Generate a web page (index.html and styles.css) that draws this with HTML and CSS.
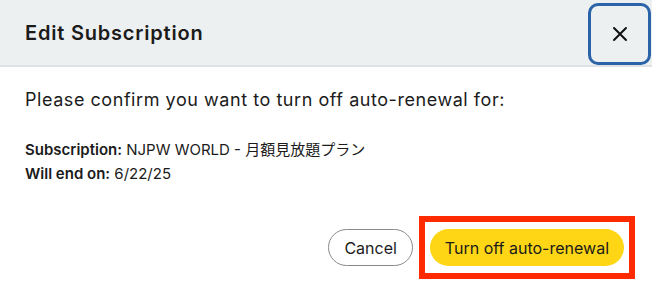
FILE: index.html
```html
<!DOCTYPE html>
<html lang="en">
<head>
  <meta charset="UTF-8" />
  <meta name="viewport" content="width=device-width, initial-scale=1.0"/>
  <title>Edit Subscription</title>
  <link rel="stylesheet" href="styles.css">
</head>
<body>

  <div class="modal">
    <div class="modal-header">
      <h2 class="modal-title">Edit Subscription</h2>
      <button class="close-btn" aria-label="Close">
        <svg width="16" height="16" viewBox="0 0 16 16">
          <path d="M2 2 L14 14 M14 2 L2 14" stroke="#111" stroke-width="2" stroke-linecap="round"/>
        </svg>
      </button>
    </div>

    <div class="modal-body">
      <p class="confirm-text">Please confirm you want to turn off auto-renewal for:</p>
      <div class="details">
        <div><b>Subscription:</b> NJPW WORLD - 月額見放題プラン</div>
        <div><b>Will end on:</b> 6/22/25</div>
      </div>
    </div>

    <div class="modal-footer">
      <button class="btn btn-cancel">Cancel</button>
      <div class="highlight">
        <button class="btn btn-primary">Turn off auto-renewal</button>
      </div>
    </div>
  </div>

</body>
</html>
```

FILE: styles.css
```css
body {
  margin: 0;
  background-color: white;
  font-family: Inter, "Noto Sans CJK JP", sans-serif;
  color: #1b1b1b;
}

.modal {
  width: 652px;
  height: 291px;
}

.modal-header {
  display: flex;
  align-items: center;
  justify-content: space-between;
  height: 65px;
  padding: 0 1px 0 25px;
  background-color: #edf0f1;
  border-bottom: 2px solid #dfe2e4;
}

.modal-title {
  margin: 0;
  font-size: 20px;
  font-weight: 600;
  letter-spacing: 0.8px;
}

.close-btn {
  width: 63px;
  height: 62px;
  margin-top: 2px;
  display: flex;
  align-items: center;
  justify-content: center;
  background: transparent;
  border: 3px solid #2a63a8;
  border-radius: 10px;
  padding: 0;
}

.modal-body {
  padding: 22px 25px 0;
}

.confirm-text {
  margin: 0 0 28px;
  font-size: 18px;
  letter-spacing: 0.55px;
}

.details {
  font-size: 15px;
  line-height: 24px;
}

.details b {
  font-weight: 600;
}

.modal-footer {
  display: flex;
  justify-content: flex-end;
  align-items: center;
  gap: 6px;
  padding: 30px 17px 0 0;
}

.btn {
  font-family: inherit;
  font-size: 16px;
  color: #1b1b1b;
  height: 37px;
  border-radius: 19px;
  cursor: pointer;
}

.btn-cancel {
  background-color: white;
  border: 1px solid #8a8a8a;
  padding: 0 15px;
}

.highlight {
  border: 6px solid #ff2a00;
  padding: 7px 5px;
  display: flex;
}

.btn-primary {
  background-color: #ffd615;
  border: none;
  padding: 0 15px;
}
```
